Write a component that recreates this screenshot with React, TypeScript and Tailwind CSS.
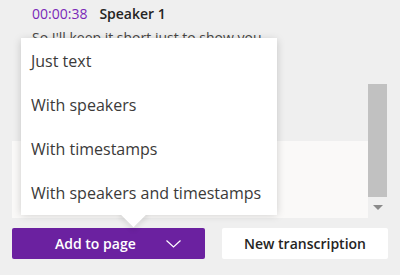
const options = ["Just text", "With speakers", "With timestamps", "With speakers and timestamps"];

const App = () => {
  return (
    <div className="relative w-[400px] h-[275px] overflow-hidden bg-[#efefef] font-['Open_Sans',sans-serif]">
      <div className="flex h-[218px]">
        <div className="ml-[12px] w-[356px] flex flex-col">
          <div className="pl-[20px] pt-[4px] flex items-center gap-[12px] text-[14px] leading-[20px]">
            <span className="text-[#7a28b8]">00:00:38</span>
            <span className="font-semibold text-[#252423]">Speaker 1</span>
          </div>
          <p className="pl-[20px] pt-[4px] text-[14px] leading-[20px] text-[#484644]">
            So I'll keep it short just to show you
          </p>
          <div className="mt-auto h-[77px] bg-[#faf9f8]" />
        </div>
        <div className="w-[19px] flex flex-col items-center">
          <div className="mt-[84px] w-[19px] h-[113px] bg-[#c1c1c1]" />
          <div className="mt-[8px] w-0 h-0 border-l-[5px] border-r-[5px] border-t-[5px] border-l-transparent border-r-transparent border-t-[#8a8a8a]" />
        </div>
      </div>

      <div className="mt-[10px] flex px-[12px] gap-[17px]">
        <button className="w-[193px] h-[31px] rounded-[2px] bg-[#6b21a0] text-white text-[14px] font-semibold flex items-center pl-[43px]">
          <span>Add to page</span>
          <svg width="15" height="8" viewBox="0 0 15 8" className="ml-auto mr-[24px]">
            <polyline points="0.5,0.5 7.5,7 14.5,0.5" fill="none" stroke="white" strokeWidth="1.2" />
          </svg>
        </button>
        <button className="w-[166px] h-[31px] rounded-[2px] bg-white text-[#252423] text-[14px] font-semibold">
          New transcription
        </button>
      </div>

      <div className="absolute left-[21px] top-[38px] w-[256px] h-[175px] bg-white rounded-[2px] shadow-[0_2px_8px_rgba(0,0,0,0.18)]">
        <div className="absolute left-[102px] bottom-[-10px] w-[21px] h-[21px] rotate-45 bg-white shadow-[3px_3px_5px_rgba(0,0,0,0.08)]" />
        <ul className="relative bg-white flex flex-col pt-[1px]">
          {options.map((o) => (
            <li key={o} className="h-[44px] flex items-center pl-[10px] text-[16px] text-[#3b3a39]">
              {o}
            </li>
          ))}
        </ul>
      </div>
    </div>
  );
};

export default App;
